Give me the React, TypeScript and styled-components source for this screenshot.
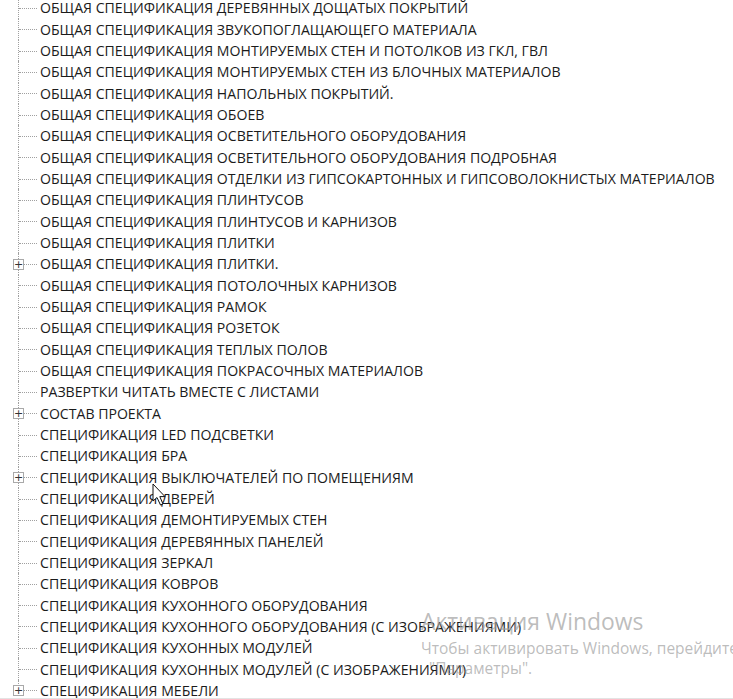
import styled, { createGlobalStyle } from "styled-components";

const GlobalStyle = createGlobalStyle`
  html, body {
    margin: 0;
    padding: 0;
    background: #ffffff;
    overflow: hidden;
  }
`;

const items: { label: string; expandable?: boolean }[] = [
  { label: "ОБЩАЯ СПЕЦИФИКАЦИЯ ДЕРЕВЯННЫХ ДОЩАТЫХ ПОКРЫТИЙ" },
  { label: "ОБЩАЯ СПЕЦИФИКАЦИЯ ЗВУКОПОГЛАЩАЮЩЕГО МАТЕРИАЛА" },
  { label: "ОБЩАЯ СПЕЦИФИКАЦИЯ МОНТИРУЕМЫХ СТЕН И ПОТОЛКОВ ИЗ ГКЛ, ГВЛ" },
  { label: "ОБЩАЯ СПЕЦИФИКАЦИЯ МОНТИРУЕМЫХ СТЕН ИЗ БЛОЧНЫХ МАТЕРИАЛОВ" },
  { label: "ОБЩАЯ СПЕЦИФИКАЦИЯ НАПОЛЬНЫХ ПОКРЫТИЙ." },
  { label: "ОБЩАЯ СПЕЦИФИКАЦИЯ ОБОЕВ" },
  { label: "ОБЩАЯ СПЕЦИФИКАЦИЯ ОСВЕТИТЕЛЬНОГО ОБОРУДОВАНИЯ" },
  { label: "ОБЩАЯ СПЕЦИФИКАЦИЯ ОСВЕТИТЕЛЬНОГО ОБОРУДОВАНИЯ ПОДРОБНАЯ" },
  { label: "ОБЩАЯ СПЕЦИФИКАЦИЯ ОТДЕЛКИ ИЗ ГИПСОКАРТОННЫХ И ГИПСОВОЛОКНИСТЫХ МАТЕРИАЛОВ" },
  { label: "ОБЩАЯ СПЕЦИФИКАЦИЯ ПЛИНТУСОВ" },
  { label: "ОБЩАЯ СПЕЦИФИКАЦИЯ ПЛИНТУСОВ И КАРНИЗОВ" },
  { label: "ОБЩАЯ СПЕЦИФИКАЦИЯ ПЛИТКИ" },
  { label: "ОБЩАЯ СПЕЦИФИКАЦИЯ ПЛИТКИ.", expandable: true },
  { label: "ОБЩАЯ СПЕЦИФИКАЦИЯ ПОТОЛОЧНЫХ КАРНИЗОВ" },
  { label: "ОБЩАЯ СПЕЦИФИКАЦИЯ РАМОК" },
  { label: "ОБЩАЯ СПЕЦИФИКАЦИЯ РОЗЕТОК" },
  { label: "ОБЩАЯ СПЕЦИФИКАЦИЯ ТЕПЛЫХ ПОЛОВ" },
  { label: "ОБЩАЯ СПЕЦИФИКАЦИЯ ПОКРАСОЧНЫХ МАТЕРИАЛОВ" },
  { label: "РАЗВЕРТКИ ЧИТАТЬ ВМЕСТЕ С ЛИСТАМИ" },
  { label: "СОСТАВ ПРОЕКТА", expandable: true },
  { label: "СПЕЦИФИКАЦИЯ LED ПОДСВЕТКИ" },
  { label: "СПЕЦИФИКАЦИЯ БРА" },
  { label: "СПЕЦИФИКАЦИЯ ВЫКЛЮЧАТЕЛЕЙ ПО ПОМЕЩЕНИЯМ", expandable: true },
  { label: "СПЕЦИФИКАЦИЯ ДВЕРЕЙ" },
  { label: "СПЕЦИФИКАЦИЯ ДЕМОНТИРУЕМЫХ СТЕН" },
  { label: "СПЕЦИФИКАЦИЯ ДЕРЕВЯННЫХ ПАНЕЛЕЙ" },
  { label: "СПЕЦИФИКАЦИЯ ЗЕРКАЛ" },
  { label: "СПЕЦИФИКАЦИЯ КОВРОВ" },
  { label: "СПЕЦИФИКАЦИЯ КУХОННОГО ОБОРУДОВАНИЯ" },
  { label: "СПЕЦИФИКАЦИЯ КУХОННОГО ОБОРУДОВАНИЯ (С ИЗОБРАЖЕНИЯМИ)" },
  { label: "СПЕЦИФИКАЦИЯ КУХОННЫХ МОДУЛЕЙ" },
  { label: "СПЕЦИФИКАЦИЯ КУХОННЫХ МОДУЛЕЙ (С ИЗОБРАЖЕНИЯМИ)" },
  { label: "СПЕЦИФИКАЦИЯ МЕБЕЛИ", expandable: true },
];

const App = () => {
  return (
    <>
      <GlobalStyle />
      <Viewport>
        <Tree>
          {items.map((item) => (
            <Row key={item.label}>
              <Gutter>
                {item.expandable && <ExpandBox>+</ExpandBox>}
              </Gutter>
              <Label>{item.label}</Label>
            </Row>
          ))}
        </Tree>
        <Cursor width="16" height="24" viewBox="0 0 16 24">
          <path
            d="M1 1 L1 18 L5 14.5 L8.5 22 L11 21 L7.8 13.6 L13 13.6 Z"
            fill="#ffffff"
            stroke="#111111"
            strokeWidth="1"
            strokeLinejoin="miter"
          />
        </Cursor>
        <Watermark>
          <WatermarkTitle>Активация Windows</WatermarkTitle>
          <WatermarkText>Чтобы активировать Windows, перейдите в раздел</WatermarkText>
          <WatermarkText indent>"Параметры".</WatermarkText>
        </Watermark>
      </Viewport>
    </>
  );
};

export default App;

const Viewport = styled.div`
  position: relative;
  width: 733px;
  height: 699px;
  overflow: hidden;
  background: #ffffff;
  border-bottom: 1px solid #e3e3e3;
  box-sizing: border-box;
`;

const Tree = styled.div`
  display: flex;
  flex-direction: column;
  margin-top: -2.7px;
`;

const Row = styled.div`
  display: flex;
  align-items: center;
  height: 21.33px;
  flex-shrink: 0;

  &:last-child > div::before {
    height: 50%;
  }
`;

const Gutter = styled.div`
  position: relative;
  width: 40px;
  height: 100%;
  flex-shrink: 0;

  &::before {
    content: "";
    position: absolute;
    left: 18px;
    top: 0;
    height: 100%;
    border-left: 1px dotted #a0a0a0;
  }

  &::after {
    content: "";
    position: absolute;
    left: 19px;
    top: 50%;
    width: 18px;
    border-top: 1px dotted #a0a0a0;
  }
`;

const ExpandBox = styled.div`
  position: absolute;
  z-index: 1;
  left: 13px;
  top: 50%;
  width: 9px;
  height: 9px;
  margin-top: -5px;
  border: 1px solid #a9a9a9;
  background: #ffffff;
  color: #333333;
  font-family: "DejaVu Sans", sans-serif;
  font-size: 11px;
  line-height: 9px;
  text-align: center;
`;

const Label = styled.span`
  font-family: "Open Sans", "Noto Sans", sans-serif;
  font-size: 14.1px;
  color: #1b1b1b;
  white-space: nowrap;
`;

const Cursor = styled.svg`
  position: absolute;
  left: 152px;
  top: 483px;
`;

const Watermark = styled.div`
  position: absolute;
  left: 421px;
  top: 607px;
  display: flex;
  flex-direction: column;
  pointer-events: none;
  font-family: "Open Sans", "Noto Sans", sans-serif;
  color: rgba(160, 160, 160, 0.7);
  white-space: nowrap;
`;

const WatermarkTitle = styled.div`
  font-size: 22.9px;
  line-height: 29px;
  margin-bottom: 2px;
`;

const WatermarkText = styled.div<{ indent?: boolean }>`
  font-size: 15.5px;
  line-height: 20px;
  padding-left: ${({ indent }) => (indent ? "8px" : "0")};
`;
